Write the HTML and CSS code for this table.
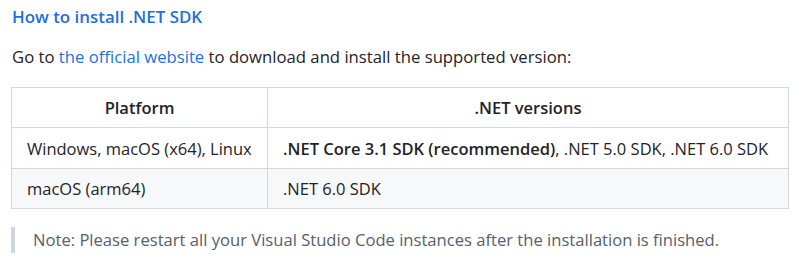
FILE: index.html
```html
<!DOCTYPE html>
<html>
<head>
<meta charset="utf-8">
<link rel="stylesheet" href="styles.css">
</head>
<body>
<div class="page">
  <h3 class="title">How to install .NET SDK</h3>
  <p class="intro">Go to <a href="#">the official website</a> to download and install the supported version:</p>
  <table class="tbl">
    <colgroup><col class="col1"><col class="col2"></colgroup>
    <thead>
      <tr><th>Platform</th><th>.NET versions</th></tr>
    </thead>
    <tbody>
      <tr><td>Windows, macOS (x64), Linux</td><td><strong>.NET Core 3.1 SDK (recommended)</strong>, .NET 5.0 SDK, .NET 6.0 SDK</td></tr>
      <tr class="alt"><td>macOS (arm64)</td><td>.NET 6.0 SDK</td></tr>
    </tbody>
  </table>
  <blockquote class="note">Note: Please restart all your Visual Studio Code instances after the installation is finished.</blockquote>
</div>
</body>
</html>
```
FILE: styles.css
```css
html, body { margin: 0; padding: 0; background: #fff; }
body { font-family: "Open Sans", "Noto Sans", sans-serif; color: #1f2328; font-size: 16.5px; }
.page { padding: 0 12px 0 11px; }
.title { margin: 0; padding-top: 6px; font-size: 16.9px; font-weight: 600; color: #1f6fdc; line-height: 22px; padding-left: 1px; }
.intro { margin: 0; padding-top: 18px; font-size: 16.7px; line-height: 22px; padding-left: 1px; }
.intro a { color: #1f6fdc; text-decoration: none; }
.tbl { margin-top: 19px; border-collapse: collapse; width: 778px; table-layout: fixed; }
.tbl .col1 { width: 256px; }
.tbl th, .tbl td { border: 1px solid #d0d7de; height: 40.4px; padding: 0 0 0 15px; box-sizing: border-box; white-space: nowrap; overflow: hidden; }
.tbl th { font-weight: 600; text-align: center; padding: 0; }
.tbl strong { font-weight: 600; }
.tbl tr.alt { background: #f6f8fa; }
.note { margin: 18px 0 0 0; border-left: 4px solid #d0d7de; padding: 2px 0 2px 18px; color: #57606a; font-size: 16.6px; line-height: 22px; }
```
